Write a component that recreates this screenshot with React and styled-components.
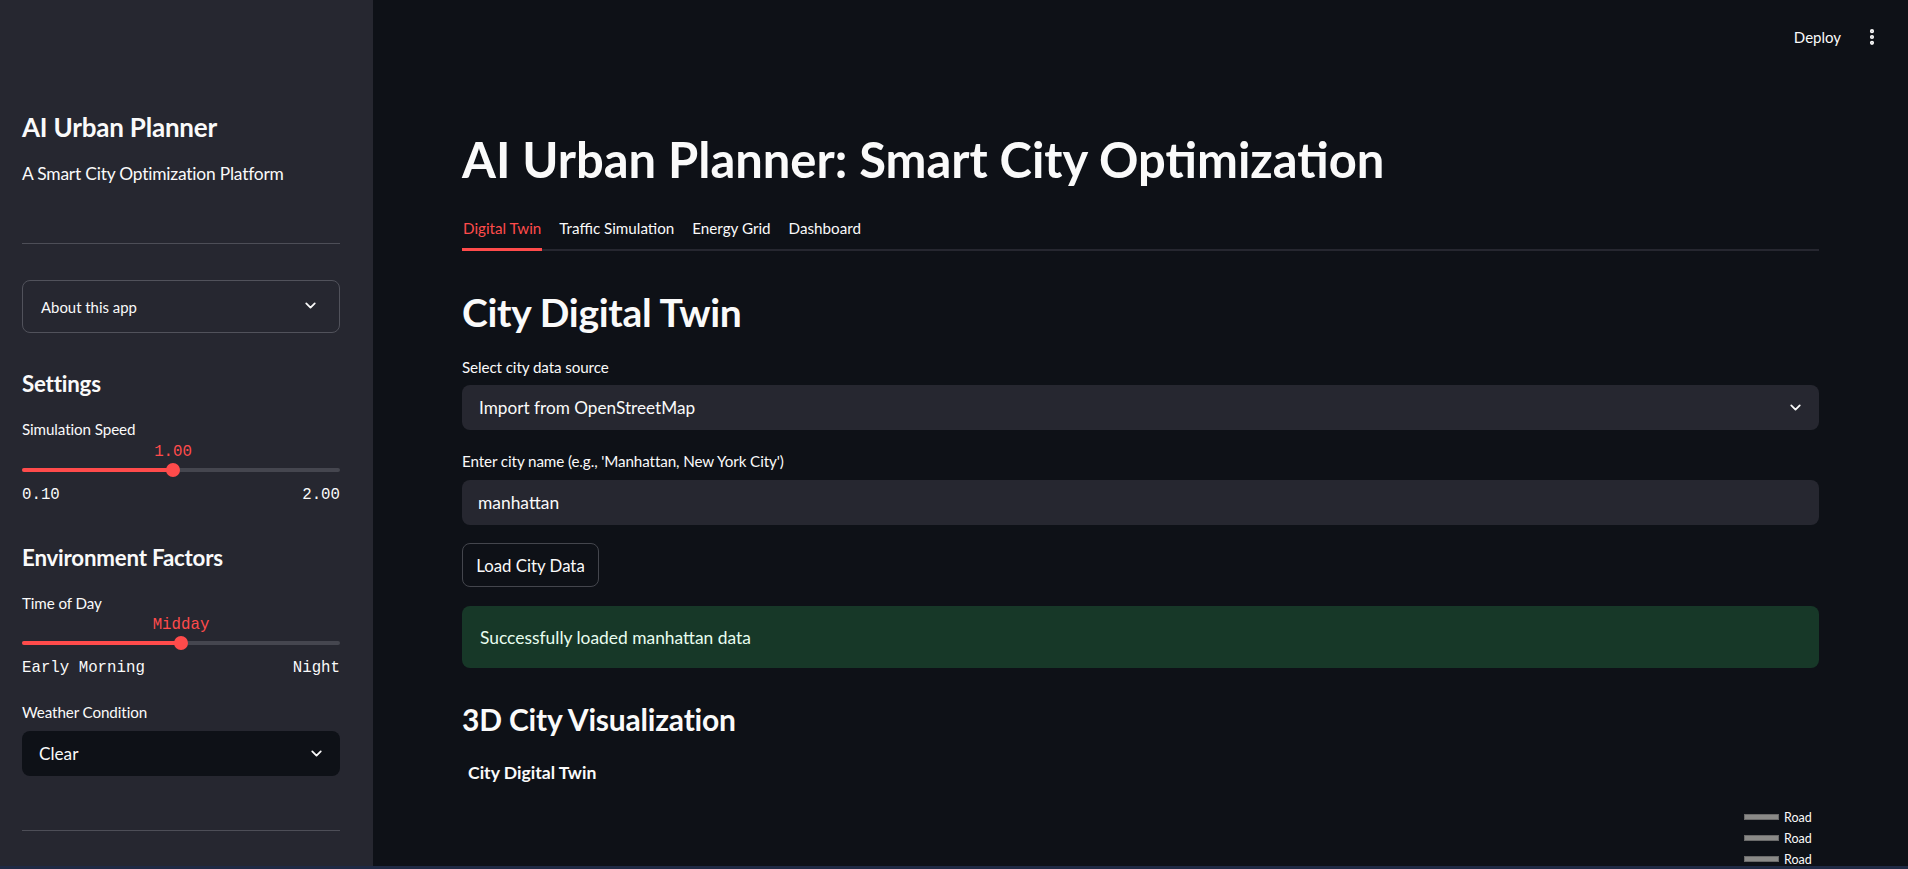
import React from 'react'
import styled, { createGlobalStyle } from 'styled-components'
import { ChevronDown, EllipsisVertical } from 'lucide-react'

const GlobalStyle = createGlobalStyle`
  html, body {
    margin: 0;
    padding: 0;
    background: #0e1117;
    color: #fafafa;
    font-family: Lato, "Noto Sans", sans-serif;
  }
  * { box-sizing: border-box; }
`;

const tabs = ['Digital Twin', 'Traffic Simulation', 'Energy Grid', 'Dashboard'];

function Slider({ value, min, max, percent, top }) {
  return (
    <SliderBlock $top={top}>
      <ValueRow>
        <ValueTag style={{ left: `${percent}%` }}>{value}</ValueTag>
      </ValueRow>
      <Track>
        <Fill style={{ width: `${percent}%` }} />
        <Thumb style={{ left: `${percent}%` }} />
      </Track>
      <MinMax>
        <span>{min}</span>
        <span>{max}</span>
      </MinMax>
    </SliderBlock>
  );
}

function App() {
  return (
    <>
      <GlobalStyle />
      <Layout>
        <Sidebar>
          <SideTitle>AI Urban Planner</SideTitle>
          <SideSub>A Smart City Optimization Platform</SideSub>
          <Divider $top={57} />
          <Expander>
            <span>About this app</span>
            <ChevronDown size={17} strokeWidth={2.5} />
          </Expander>
          <SideHeading $top={35.5}>Settings</SideHeading>
          <Label $top={20}>Simulation Speed</Label>
          <Slider value="1.00" min="0.10" max="2.00" percent={47.5} top={4.5} />
          <SideHeading $top={38.5}>Environment Factors</SideHeading>
          <Label $top={20}>Time of Day</Label>
          <Slider value="Midday" min="Early Morning" max="Night" percent={50} top={3} />
          <Label $top={25}>Weather Condition</Label>
          <Select $dark $top={9}>
            <span>Clear</span>
            <ChevronDown size={17} strokeWidth={2.5} />
          </Select>
          <Divider $top={54} />
        </Sidebar>

        <Main>
          <Header>
            <Deploy>Deploy</Deploy>
            <EllipsisVertical size={20} strokeWidth={3} />
          </Header>
          <Content>
            <H1>AI Urban Planner: Smart City Optimization</H1>
            <TabList>
              {tabs.map((t, i) => (
                <Tab key={t} $active={i === 0}>{t}</Tab>
              ))}
            </TabList>
            <H2>City Digital Twin</H2>
            <Label $top={23.5}>Select city data source</Label>
            <Select $top={8}>
              <span>Import from OpenStreetMap</span>
              <ChevronDown size={17} strokeWidth={2.5} />
            </Select>
            <Label $top={21}>Enter city name (e.g., 'Manhattan, New York City')</Label>
            <Input $top={9}>manhattan</Input>
            <Button>Load City Data</Button>
            <Alert>Successfully loaded manhattan data</Alert>
            <H3>3D City Visualization</H3>
            <Chart>
              <ChartTitle>City Digital Twin</ChartTitle>
              <Legend>
                {['Road', 'Road', 'Road'].map((r, i) => (
                  <LegendItem key={i}>
                    <Swatch />
                    <span>{r}</span>
                  </LegendItem>
                ))}
              </Legend>
            </Chart>
          </Content>
        </Main>
      </Layout>
      <TaskEdge />
    </>
  );
}

export default App

const Layout = styled.div`
  display: flex;
  height: 100vh;
  overflow: hidden;
`;

const Sidebar = styled.aside`
  width: 373px;
  flex-shrink: 0;
  background: #262730;
  padding: 110px 33px 0 22px;
  display: flex;
  flex-direction: column;
`;

const SideTitle = styled.h1`
  margin: 0;
  font-size: 26px;
  font-weight: 700;
  line-height: 34px;
  letter-spacing: -0.2px;
`;

const SideSub = styled.p`
  margin: 18px 0 0;
  font-size: 17.4px;
  line-height: 24px;
  letter-spacing: -0.2px;
`;

const Divider = styled.hr`
  margin: ${p => p.$top}px 0 0;
  border: none;
  height: 1px;
  background: #4d4e57;
`;

const Expander = styled.div`
  margin-top: 36px;
  height: 53px;
  border: 1px solid #51525b;
  border-radius: 8px;
  display: flex;
  align-items: center;
  justify-content: space-between;
  padding: 0 20px 0 18px;
  font-size: 14.9px;
  svg { margin-top: -3px; }
`;

const SideHeading = styled.h2`
  margin: ${p => p.$top}px 0 0;
  font-size: 22.3px;
  font-weight: 700;
  line-height: 30px;
  letter-spacing: -0.2px;
`;

const Label = styled.label`
  display: block;
  margin-top: ${p => p.$top}px;
  font-size: 15.2px;
  line-height: 20px;
  letter-spacing: -0.1px;
`;

const SliderBlock = styled.div`
  margin-top: ${p => p.$top}px;
  display: flex;
  flex-direction: column;
  font-family: "Liberation Mono", "DejaVu Sans Mono", monospace;
  font-size: 15.75px;
`;

const ValueRow = styled.div`
  position: relative;
  height: 18px;
`;

const ValueTag = styled.span`
  position: absolute;
  top: 0;
  transform: translateX(-50%);
  line-height: 18px;
  color: #ff4b4b;
  white-space: nowrap;
`;

const Track = styled.div`
  position: relative;
  height: 4px;
  margin: 7px 0;
  border-radius: 2px;
  background: #45464f;
`;

const Fill = styled.div`
  height: 100%;
  border-radius: 2px;
  background: #ff4b4b;
`;

const Thumb = styled.div`
  position: absolute;
  top: 50%;
  width: 14px;
  height: 14px;
  border-radius: 50%;
  background: #ff4b4b;
  transform: translate(-50%, -50%);
`;

const MinMax = styled.div`
  margin-top: 7px;
  display: flex;
  justify-content: space-between;
  line-height: 18px;
`;

const Select = styled.div`
  margin-top: ${p => p.$top}px;
  height: 45px;
  border-radius: 8px;
  background: ${p => (p.$dark ? '#0e1117' : '#262730')};
  display: flex;
  align-items: center;
  justify-content: space-between;
  padding: 0 15px 0 17px;
  font-size: 17.2px;
`;

const Main = styled.main`
  flex: 1;
  display: flex;
  flex-direction: column;
  min-width: 0;
`;

const Header = styled.header`
  height: 73px;
  flex-shrink: 0;
  display: flex;
  align-items: center;
  justify-content: flex-end;
  gap: 21px;
  padding-right: 26px;
`;

const Deploy = styled.span`
  font-size: 15px;
`;

const Content = styled.div`
  padding: 0 89px;
  display: flex;
  flex-direction: column;
`;

const H1 = styled.h1`
  margin: 58px 0 0;
  font-size: 48.9px;
  font-weight: 700;
  line-height: 56px;
`;

const TabList = styled.div`
  margin-top: 30.5px;
  display: flex;
  gap: 16px;
  border-bottom: 2px solid #262730;
`;

const Tab = styled.div`
  font-size: 15.2px;
  line-height: 20px;
  padding: 0 1px 10px;
  margin-bottom: -2px;
  border-bottom: 3px solid ${p => (p.$active ? '#ff4b4b' : 'transparent')};
  color: ${p => (p.$active ? '#ff4b4b' : '#fafafa')};
`;

const H2 = styled.h2`
  margin: 39px 0 0;
  font-size: 39px;
  font-weight: 700;
  line-height: 44px;
  letter-spacing: -0.3px;
`;

const Input = styled.div`
  margin-top: ${p => p.$top}px;
  height: 45px;
  border-radius: 8px;
  background: #262730;
  display: flex;
  align-items: center;
  padding: 0 16px;
  font-size: 17.4px;
`;

const Button = styled.button`
  margin-top: 18px;
  align-self: flex-start;
  height: 44px;
  width: 137px;
  border: 1px solid #44464d;
  border-radius: 8px;
  background: transparent;
  color: #fafafa;
  font-family: inherit;
  font-size: 16.8px;
  cursor: pointer;
`;

const Alert = styled.div`
  margin-top: 19px;
  height: 62px;
  border-radius: 8px;
  background: #173828;
  color: #e8fdef;
  display: flex;
  align-items: center;
  padding: 0 18px;
  font-size: 17.4px;
`;

const H3 = styled.h3`
  margin: 32px 0 0;
  font-size: 30px;
  font-weight: 700;
  line-height: 38px;
  letter-spacing: -0.2px;
`;

const Chart = styled.div`
  margin-top: 25px;
  display: flex;
  flex-direction: column;
`;

const ChartTitle = styled.div`
  padding-left: 6px;
  font-size: 17.6px;
  font-weight: 700;
  line-height: 20px;
`;

const Legend = styled.div`
  margin-top: 23.5px;
  align-self: flex-end;
  width: 75px;
  display: flex;
  flex-direction: column;
`;

const LegendItem = styled.div`
  height: 21px;
  display: flex;
  align-items: center;
  gap: 5px;
  font-size: 12.5px;
`;

const Swatch = styled.span`
  width: 35px;
  height: 6px;
  background: #8a8a88;
  border: 1px solid #6a6a6a;
`;

const TaskEdge = styled.div`
  position: fixed;
  left: 0;
  right: 0;
  bottom: 0;
  height: 3px;
  background: #1f2a44;
`;
